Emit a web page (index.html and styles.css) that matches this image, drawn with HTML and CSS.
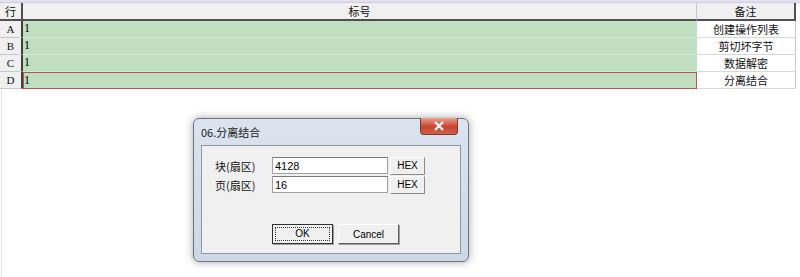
FILE: index.html
```html
<!DOCTYPE html>
<html lang="zh">
  <head>
    <meta charset="UTF-8" />
    <link rel="stylesheet" href="styles.css">
  </head>
  <body>
    <div class="topline"></div>
    <div class="sheet">
      <div class="head corner">行</div>
      <div class="head">标号</div>
      <div class="head note-head">备注</div>

      <div class="rowhead">A</div>
      <div class="cell">1</div>
      <div class="note">创建操作列表</div>

      <div class="rowhead">B</div>
      <div class="cell">1</div>
      <div class="note">剪切坏字节</div>

      <div class="rowhead">C</div>
      <div class="cell">1</div>
      <div class="note">数据解密</div>

      <div class="rowhead">D</div>
      <div class="cell current">1</div>
      <div class="note">分离结合</div>
    </div>
    <div class="leftline"></div>

    <div class="dialog">
      <div class="titlebar">
        <span class="title">06.分离结合</span>
        <span class="close">
          <svg width="12" height="10" viewBox="0 0 12 10">
            <path d="M2 1 L10 9 M10 1 L2 9" stroke="#fff" stroke-width="2.2" />
          </svg>
        </span>
      </div>
      <div class="client">
        <div class="field">
          <span class="label">块(扇区)</span>
          <input class="input" value="4128" />
          <button class="hex">HEX</button>
        </div>
        <div class="field">
          <span class="label">页(扇区)</span>
          <input class="input" value="16" />
          <button class="hex">HEX</button>
        </div>
        <div class="buttons">
          <button class="btn ok"><span>OK</span></button>
          <button class="btn">Cancel</button>
        </div>
      </div>
    </div>
  </body>
</html>
```

FILE: styles.css
```css
body {
  margin: 0;
  padding: 0;
  background-color: #ffffff;
  font-family: "Noto Sans CJK SC", "Liberation Sans", sans-serif;
  font-size: 11px;
  color: #111;
  position: relative;
  height: 277px;
  overflow: hidden;
}
.topline {
  height: 3px;
  background-color: #e4e0ee;
  border-bottom: 1px solid #d0cde0;
  box-sizing: border-box;
}
.sheet {
  display: grid;
  grid-template-columns: 23px 674px 99px;
  grid-template-rows: 18px repeat(4, 17px);
  width: 796px;
}
.head {
  background-color: #f0f0f0;
  border-bottom: 2px solid #505050;
  border-right: 1px solid #c8c8c8;
  display: flex;
  align-items: center;
  justify-content: center;
  line-height: 1;
}
.corner {
  border-right: 2px solid #505050;
}
.note-head {
  border-right: 2px solid #505050;
}
.rowhead {
  background-color: #f0f0f0;
  border-right: 2px solid #404040;
  border-bottom: 1px solid #c8c8c8;
  display: flex;
  align-items: center;
  justify-content: center;
  font-family: "Liberation Serif", serif;
  font-size: 11px;
}
.cell {
  background-color: #c0dfc0;
  border-bottom: 1px solid #d8e8d8;
  font-family: "Liberation Serif", serif;
  font-size: 12px;
  padding-left: 1px;
  line-height: 14px;
  color: #000;
}
.current {
  border: 1px solid #c0504d;
  box-sizing: border-box;
  padding-left: 0;
}
.note {
  border-bottom: 1px solid #d8d8d8;
  border-right: 1px solid #c8c8c8;
  display: flex;
  align-items: center;
  justify-content: center;
  line-height: 1;
}
.leftline {
  position: absolute;
  left: 1px;
  top: 90px;
  width: 1px;
  height: 187px;
  background-color: #e4e4e4;
}
.dialog {
  position: absolute;
  left: 193px;
  top: 118px;
  width: 276px;
  height: 144px;
  background: linear-gradient(#dbe4ee, #cdd8e4);
  border: 1px solid #6a7684;
  border-radius: 6px;
  box-shadow: 0 0 8px rgba(0, 0, 0, 0.35);
  box-sizing: border-box;
  display: flex;
  flex-direction: column;
  padding: 0 7px 7px 7px;
}
.titlebar {
  height: 26px;
  display: flex;
  align-items: center;
  justify-content: space-between;
}
.title {
  font-size: 11px;
  color: #222;
}
.close {
  align-self: flex-start;
  width: 36px;
  height: 16px;
  margin-top: -1px;
  margin-right: 3px;
  background: linear-gradient(#e8a090, #c8452f 55%, #d0604a);
  border: 1px solid #7a3b30;
  border-top: none;
  border-radius: 0 0 4px 4px;
  display: flex;
  align-items: center;
  justify-content: center;
}
.client {
  flex: 1;
  background-color: #f0f0f0;
  border: 1px solid #8a98a8;
  padding: 11px 0 0 13px;
  display: flex;
  flex-direction: column;
}
.field {
  display: flex;
  align-items: center;
  height: 17px;
  margin-bottom: 2px;
}
.label {
  width: 57px;
  font-size: 11px;
}
.input {
  width: 116px;
  height: 17px;
  box-sizing: border-box;
  border: 1px solid #a0a0a0;
  border-top-color: #7a7a7a;
  background-color: #fff;
  font-family: "Liberation Sans", sans-serif;
  font-size: 11px;
  padding: 0 2px;
  margin: 0;
}
.hex {
  width: 35px;
  height: 18px;
  margin-left: 2px;
  background-color: #f0f0f0;
  border: 1px solid;
  border-color: #fff #8a8a8a #8a8a8a #fff;
  font-family: "Liberation Sans", sans-serif;
  font-size: 10px;
  padding: 0;
}
.buttons {
  display: flex;
  gap: 5px;
  margin-top: 29px;
  padding-left: 57px;
}
.btn {
  width: 61px;
  height: 20px;
  background-color: #f0f0f0;
  border: 1px solid;
  border-color: #fff #606060 #606060 #fff;
  box-shadow: 1px 1px 0 #a0a0a0;
  font-family: "Liberation Sans", sans-serif;
  font-size: 10px;
  padding: 0;
}
.ok {
  border-color: #303030;
  padding: 2px;
}
.ok span {
  display: block;
  border: 1px dotted #333;
  height: 12px;
  line-height: 12px;
}
```
